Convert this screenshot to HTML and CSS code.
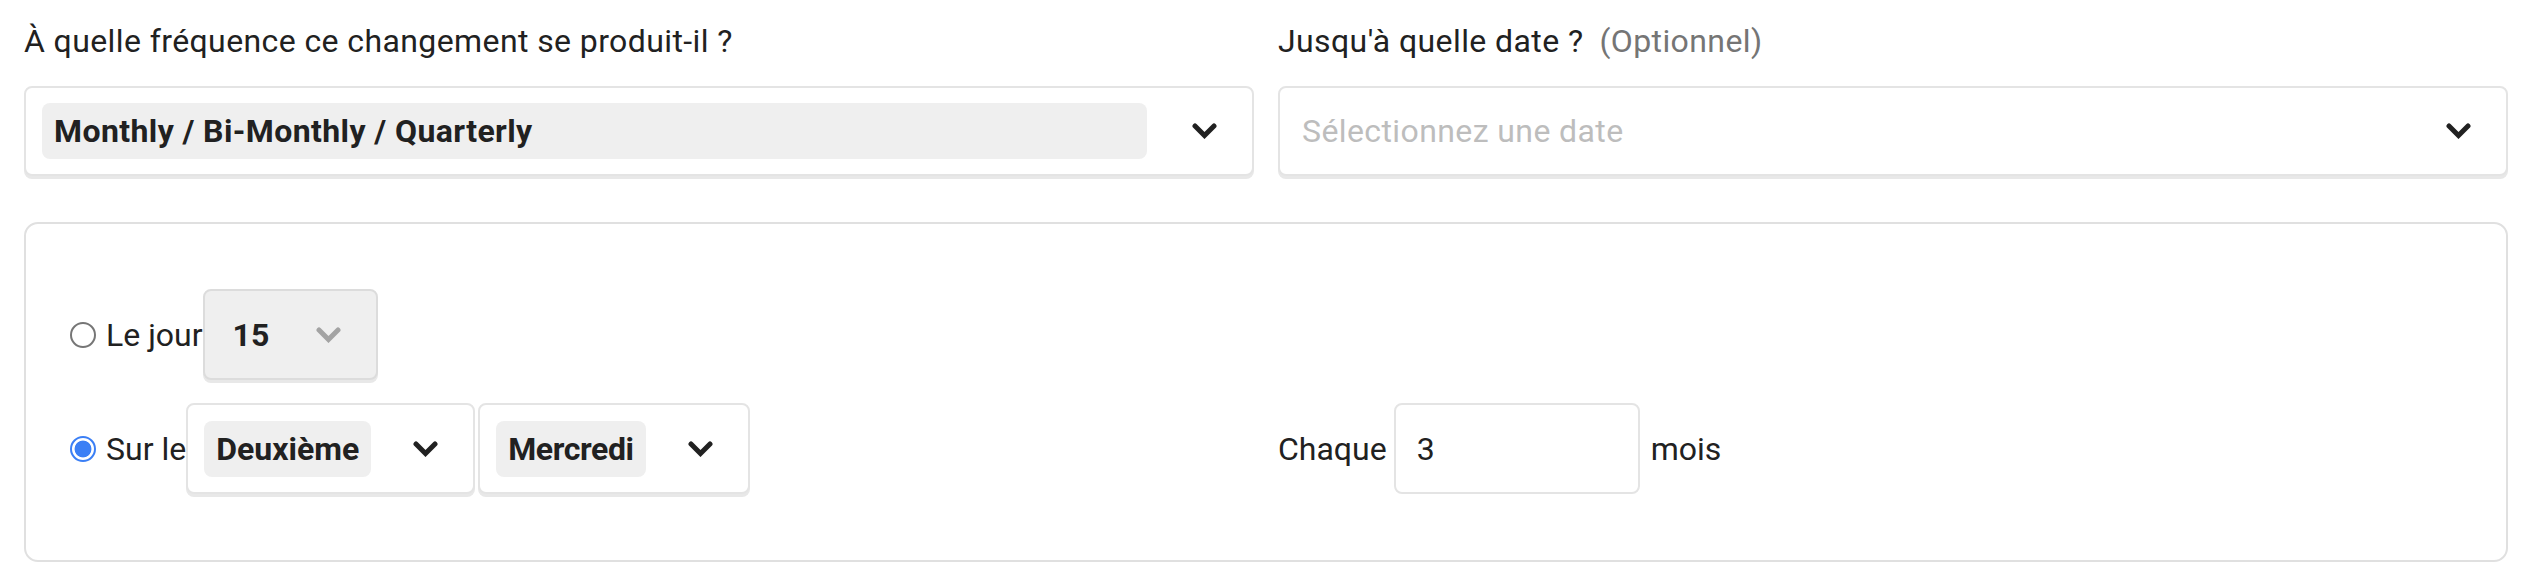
FILE: index.html
```html
<!DOCTYPE html>
<html lang="fr">
<head>
<meta charset="utf-8">
<title>Récurrence</title>
<link rel="stylesheet" href="styles.css">
</head>
<body>
<div class="page">
  <div class="top">
    <div class="field">
      <div class="label">À quelle fréquence ce changement se produit-il ?</div>
      <div class="select select-wide">
        <span class="pill pill-grow">Monthly / Bi-Monthly / Quarterly</span>
        <svg class="chev" viewBox="0 0 25 16" width="25" height="16"><path d="M3 3 L12.5 12.5 L22 3" /></svg>
      </div>
    </div>
    <div class="field">
      <div class="label">Jusqu'à quelle date ?<span class="opt">(Optionnel)</span></div>
      <div class="select select-wide">
        <span class="placeholder">Sélectionnez une date</span>
        <svg class="chev" viewBox="0 0 25 16" width="25" height="16"><path d="M3 3 L12.5 12.5 L22 3" /></svg>
      </div>
    </div>
  </div>

  <div class="box">
    <div class="row">
      <div class="cell">
        <label class="choice"><input type="radio" name="mode" class="radio">Le jour</label>
        <div class="select select-num">
          <span class="num">15</span>
          <svg class="chev chev-muted" viewBox="0 0 25 16" width="25" height="16"><path d="M3 3 L12.5 12.5 L22 3" /></svg>
        </div>
      </div>
      <div class="cell"></div>
    </div>
    <div class="row">
      <div class="cell">
        <label class="choice"><input type="radio" name="mode" class="radio" checked>Sur le</label>
        <div class="select select-compact">
          <span class="pill">Deuxième</span>
          <svg class="chev" viewBox="0 0 25 16" width="25" height="16"><path d="M3 3 L12.5 12.5 L22 3" /></svg>
        </div>
        <div class="select select-compact select-next">
          <span class="pill pill-tight">Mercredi</span>
          <svg class="chev" viewBox="0 0 25 16" width="25" height="16"><path d="M3 3 L12.5 12.5 L22 3" /></svg>
        </div>
      </div>
      <div class="cell">
        <span class="every">Chaque</span>
        <div class="input">3</div>
        <span class="unit">mois</span>
      </div>
    </div>
  </div>
</div>
</body>
</html>
```

FILE: styles.css
```css
* { box-sizing: border-box; }

html, body {
  margin: 0;
  background: #ffffff;
}

body {
  font-family: Roboto, "Noto Sans", "Liberation Sans", sans-serif;
  font-size: 32px;
  letter-spacing: 0.4px;
  color: #212121;
}

.page {
  padding: 17px 26px 0 24px;
}

.top {
  display: grid;
  grid-template-columns: 1fr 1fr;
  column-gap: 24px;
}

.label {
  line-height: 48px;
  margin-bottom: 21px;
  white-space: nowrap;
}

.opt {
  color: #757575;
  margin-left: 16px;
}

.select {
  display: flex;
  align-items: center;
  border: 2px solid #e4e4e4;
  border-radius: 8px;
  background: #ffffff;
  box-shadow: 0 3px 0 #e8e8e8;
}

.select-wide {
  height: 90px;
  padding: 0 35px 0 16px;
}

.pill {
  display: flex;
  align-items: center;
  height: 56px;
  padding: 0 12px;
  background: #efefef;
  border-radius: 8px;
  font-weight: 700;
  white-space: nowrap;
}

.pill-grow {
  flex: 1;
}

.placeholder {
  flex: 1;
  padding-left: 6px;
  color: #bdbdbd;
}

.chev {
  flex-shrink: 0;
  margin-left: 45px;
  fill: none;
  stroke: #212121;
  stroke-width: 5;
  stroke-linecap: round;
  stroke-linejoin: miter;
}

.chev-muted {
  stroke: #a3a3a3;
  margin-left: auto;
}

.box {
  margin-top: 46px;
  border: 2px solid #e0e0e0;
  border-radius: 14px;
  padding: 65px 34px 66px;
  display: flex;
  flex-direction: column;
  gap: 23px;
  letter-spacing: 0;
}

.row {
  display: grid;
  grid-template-columns: 1fr 1fr;
  column-gap: 24px;
  align-items: center;
}

.cell {
  display: flex;
  align-items: center;
  min-height: 91px;
}

.choice {
  display: flex;
  align-items: center;
  white-space: nowrap;
}

.radio {
  appearance: none;
  -webkit-appearance: none;
  width: 26px;
  height: 26px;
  margin: 0 10px;
  border: 2px solid #767676;
  border-radius: 50%;
  background: #ffffff;
}

.radio:checked {
  border-color: #3b7ff5;
  background: radial-gradient(circle, #3b7ff5 0 8px, #ffffff 8.8px 100%);
}

.select-num {
  width: 175px;
  height: 91px;
  padding: 0 35px 0 28px;
  background: #efefef;
  border-color: #dcdcdc;
}

.num {
  font-weight: 700;
}

.select-compact {
  height: 91px;
  padding: 0 35px 0 16px;
}

.select-compact .chev {
  margin-left: 42px;
}

.pill-tight {
  letter-spacing: -0.4px;
}

.select-next {
  margin-left: 3px;
}

.every {
  margin-right: 7px;
}

.input {
  display: flex;
  align-items: center;
  width: 246px;
  height: 91px;
  padding-left: 21px;
  border: 2px solid #e4e4e4;
  border-radius: 8px;
}

.unit {
  margin-left: 11px;
}
```
